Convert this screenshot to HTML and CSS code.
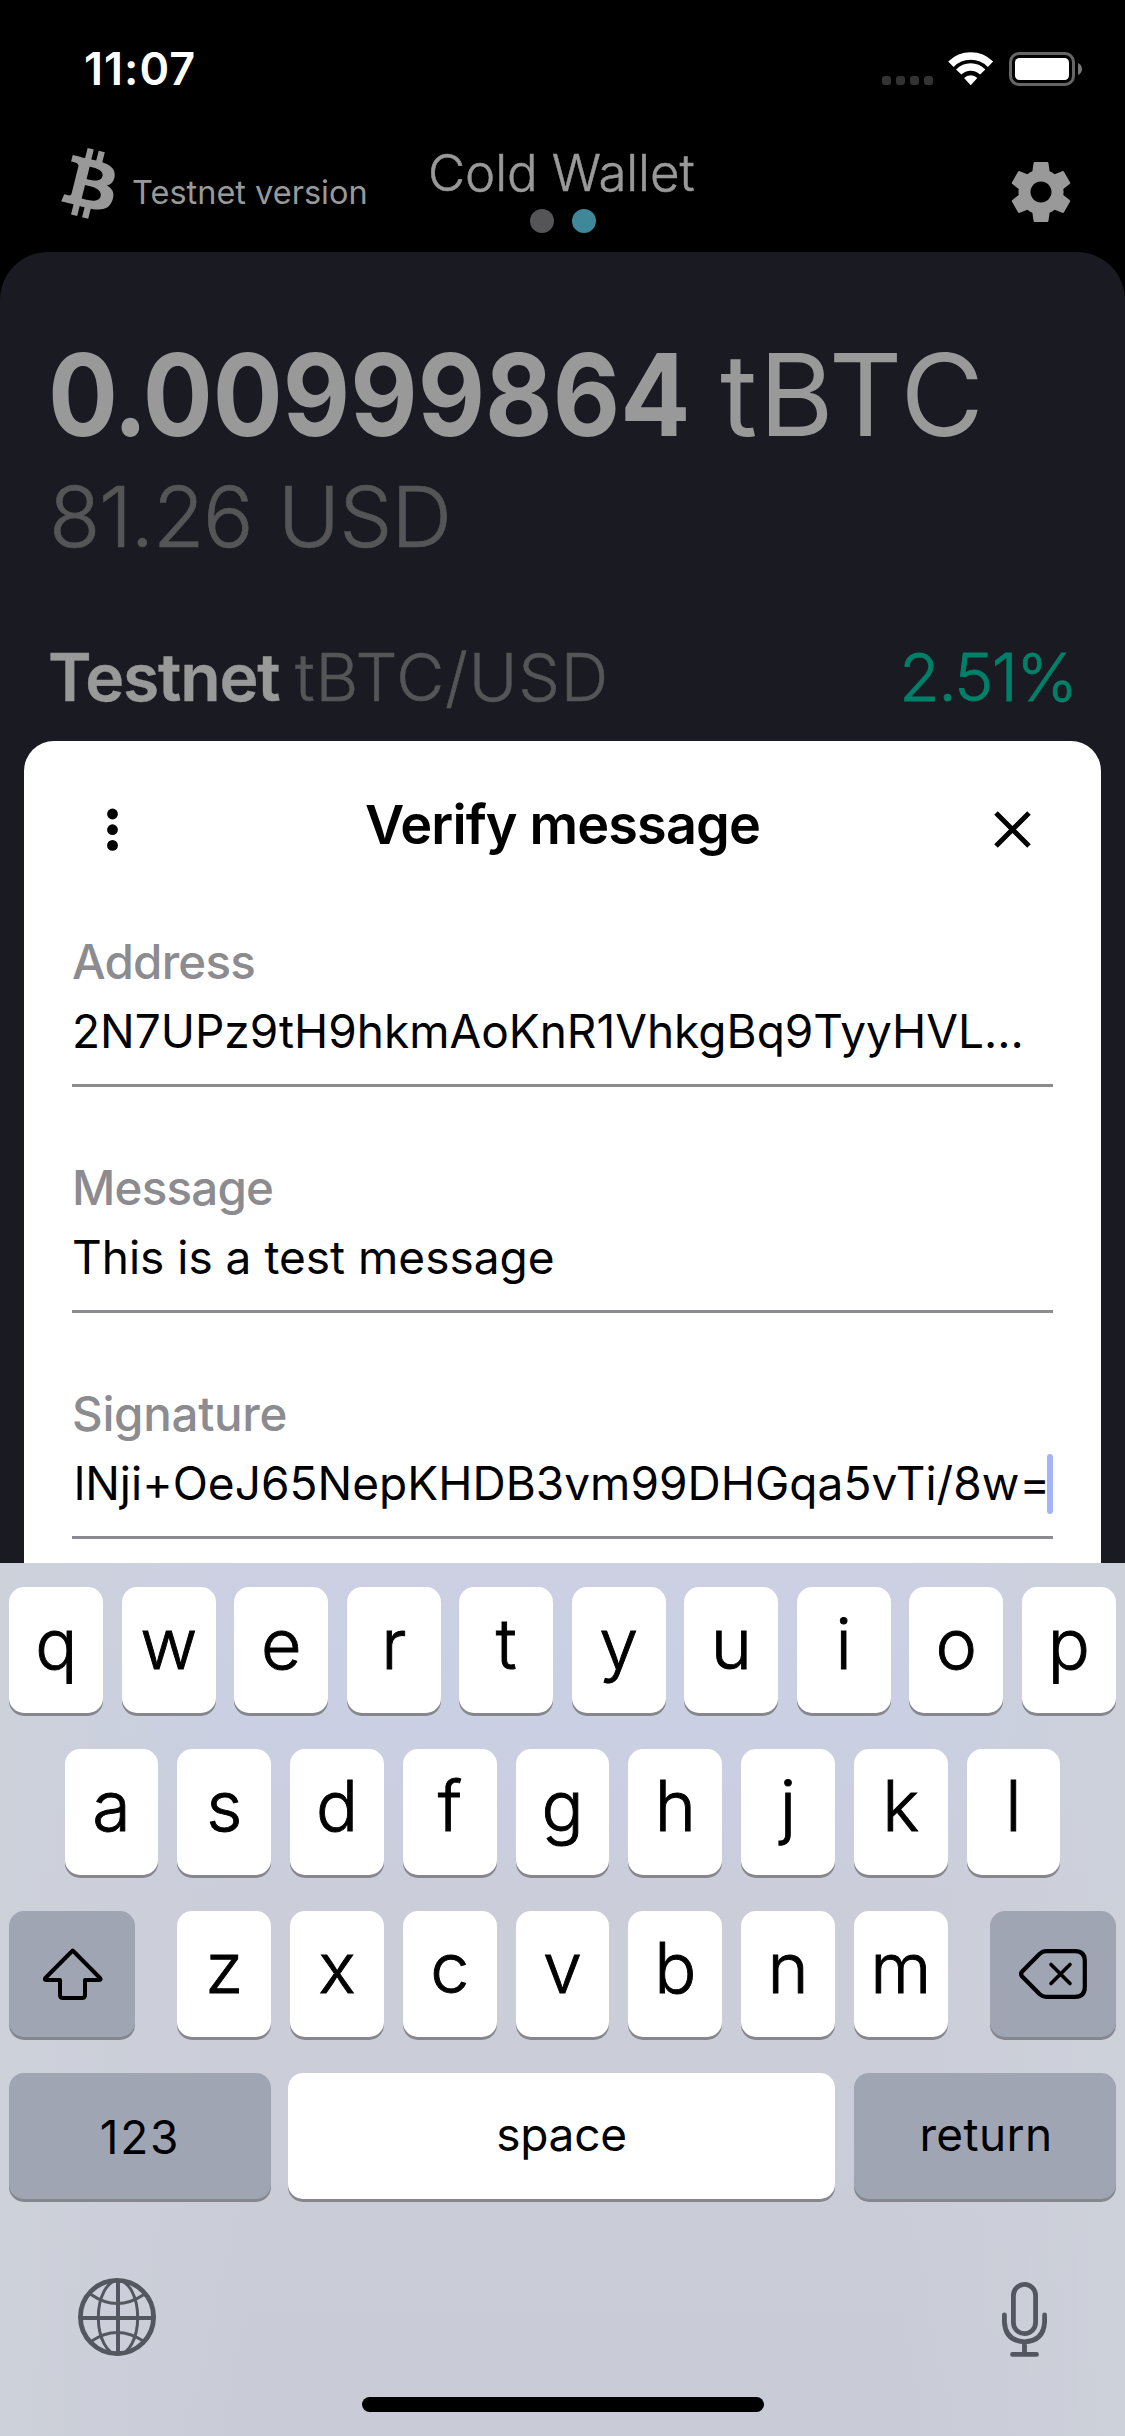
FILE: index.html
```html
<!DOCTYPE html>
<html lang="en">
<head>
<meta charset="utf-8">
<title>Cold Wallet</title>
<link rel="stylesheet" href="styles.css">
</head>
<body>
<div class="status">
  <span class="time">11:07</span>
  <div class="status-icons">
    <svg class="cell" width="51" height="34" viewBox="0 0 51 34" fill="#333"><rect x="0" y="24" width="9" height="9" rx="3"/><rect x="14" y="24" width="9" height="9" rx="3"/><rect x="28" y="24" width="9" height="9" rx="3"/><rect x="42" y="24" width="9" height="9" rx="3"/></svg>
    <svg class="wifi" width="46" height="34" viewBox="0 0 46 34" fill="none" stroke="#fff"><path stroke-width="7.6" d="M2.9 12.2A28 28 0 0 1 42.5 12.2"/><path stroke-width="7.4" d="M10.7 20A17 17 0 0 1 34.7 20"/><path fill="#fff" stroke="none" d="M22.7 33.2L16.1 25.9A9.3 9.3 0 0 1 29.3 25.9Z"/></svg>
    <svg width="73" height="34" viewBox="0 0 73 34"><rect x="1.5" y="1.5" width="63" height="31" rx="8.5" fill="none" stroke="#666" stroke-width="3"/><rect x="6" y="6" width="54" height="22" rx="4.5" fill="#fff"/><path fill="#777" d="M69 11q4 2 4 6t-4 6z"/></svg>
  </div>
</div>
<header class="header">
  <div class="brand">
    <svg width="54" height="71" viewBox="8.1 6 15.2 20" preserveAspectRatio="none" fill="#999"><path d="M23.189 14.02c.314-2.096-1.283-3.223-3.465-3.975l.708-2.84-1.728-.43-.69 2.765c-.454-.114-.92-.22-1.385-.326l.695-2.783L15.596 6l-.708 2.839c-.376-.086-.746-.17-1.104-.26l.002-.009-2.384-.595-.46 1.846s1.283.294 1.256.312c.7.175.826.638.805 1.006l-.806 3.235c.048.012.11.03.18.057l-.183-.045-1.13 4.532c-.086.212-.303.531-.793.41.018.025-1.256-.313-1.256-.313l-.858 1.978 2.25.561c.418.105.828.215 1.231.318l-.715 2.872 1.727.43.708-2.84c.472.127.93.245 1.378.357l-.706 2.828 1.728.43.715-2.866c2.948.558 5.164.333 6.097-2.333.752-2.146-.037-3.385-1.588-4.192 1.13-.26 1.98-1.003 2.207-2.538zm-3.95 5.538c-.533 2.147-4.148.986-5.32.695l.95-3.805c1.172.293 4.929.872 4.37 3.11zm.535-5.569c-.487 1.953-3.495.96-4.47.717l.86-3.45c.975.243 4.118.696 3.61 2.733z"/></svg>
    <span class="network">Testnet version</span>
  </div>
  <div class="wallet-name">
    <h1>Cold Wallet</h1>
    <div class="pager"><i></i><i class="on"></i></div>
  </div>
  <svg class="gear" width="72" height="72" viewBox="0 0 24 24" fill="#999"><path d="M19.43 12.98c.04-.32.07-.64.07-.98s-.03-.66-.07-.98l2.11-1.65c.19-.15.24-.42.12-.64l-2-3.46c-.12-.22-.39-.3-.61-.22l-2.49 1c-.52-.4-1.08-.73-1.69-.98l-.38-2.65C14.46 2.18 14.25 2 14 2h-4c-.25 0-.46.18-.49.42l-.38 2.65c-.61.25-1.17.59-1.69.98l-2.49-1c-.23-.09-.49 0-.61.22l-2 3.46c-.13.22-.07.49.12.64l2.11 1.65c-.04.32-.07.65-.07.98s.03.66.07.98l-2.11 1.65c-.19.15-.24.42-.12.64l2 3.46c.12.22.39.3.61.22l2.49-1c.52.4 1.08.73 1.69.98l.38 2.65c.03.24.24.42.49.42h4c.25 0 .46-.18.49-.42l.38-2.65c.61-.25 1.17-.59 1.69-.98l2.49 1c.23.09.49 0 .61-.22l2-3.46c.12-.22.07-.49-.12-.64l-2.11-1.65zM12 15.5c-1.93 0-3.5-1.57-3.5-3.5s1.57-3.5 3.5-3.5 3.5 1.57 3.5 3.5-1.57 3.5-3.5 3.5z"/></svg>
</header>
<main class="wallet">
  <div class="balance"><span class="amount-slot"><b class="amount">0<span class="point">.</span>00999864</b></span><span class="unit">tBTC</span></div>
  <div class="fiat"><span class="fiat-value">81.26</span> USD</div>
  <div class="market"><b class="market-name">Testnet</b><span class="pair">tBTC/USD</span><span class="change">2.51%</span></div>
  <section class="sheet">
    <div class="sheet-head">
      <svg class="more" width="11" height="45" viewBox="0 0 11 45"><circle cx="5.5" cy="6" r="5.4"/><circle cx="5.5" cy="21.7" r="5.4"/><circle cx="5.5" cy="37.4" r="5.4"/></svg>
      <h2>Verify message</h2>
      <svg class="close" width="37" height="37" viewBox="0 0 37 37" stroke="#000" stroke-width="5"><path d="M2 2L35 35M35 2L2 35"/></svg>
    </div>
    <div class="fields">
      <div class="field"><label>Address</label><div class="value">2N7UPz9tH9hkmAoKnR1VhkgBq9TyyHVL...</div></div>
      <div class="field"><label>Message</label><div class="value">This is a test message</div></div>
      <div class="field"><label class="wide">Signature</label><div class="value active">lNji+OeJ65NepKHDB3vm99DHGqa5vTi/8w=<i class="caret"></i></div></div>
    </div>
  </section>
</main>
<div class="keyboard">
  <div class="row"><span class="key">q</span><span class="key">w</span><span class="key">e</span><span class="key">r</span><span class="key">t</span><span class="key">y</span><span class="key">u</span><span class="key">i</span><span class="key">o</span><span class="key">p</span></div>
  <div class="row"><span class="key">a</span><span class="key">s</span><span class="key">d</span><span class="key">f</span><span class="key">g</span><span class="key">h</span><span class="key">j</span><span class="key">k</span><span class="key">l</span></div>
  <div class="row spread">
    <span class="key dark icon"><svg width="60" height="52" viewBox="0 0 60 52" fill="none" stroke="#000" stroke-width="4" stroke-linejoin="round"><path d="M29.7 2.5L57 30q1.5 2-.8 2H42V47q0 3-3 3H20q-3 0-3-3V32H3.2q-2.3 0-.8-2Z"/></svg></span>
    <div class="letters"><span class="key">z</span><span class="key">x</span><span class="key">c</span><span class="key">v</span><span class="key">b</span><span class="key">n</span><span class="key">m</span></div>
    <span class="key dark icon"><svg width="68" height="50" viewBox="0 0 68 50" fill="none" stroke="#000" stroke-width="4.2" stroke-linecap="round" stroke-linejoin="round"><path d="M3.2 22.5L20.5 5Q23.5 2.2 27 2.2H56Q65.8 2.2 65.8 12V38Q65.8 47.8 56 47.8H27Q23.5 47.8 20.5 45L3.2 27.5Q1 25 3.2 22.5Z"/><path stroke-width="3.6" d="M32 15.5L51 34.5M51 15.5L32 34.5"/></svg></span>
  </div>
  <div class="row spread">
    <span class="key dark side num">123</span><span class="key space">space</span><span class="key dark side return">return</span>
  </div>
  <div class="tools">
    <svg width="78" height="78" viewBox="0 0 78 78" fill="none" stroke="#53575f" stroke-width="3"><circle cx="39" cy="39" r="36.6" stroke-width="4.8"/><path stroke-width="4" d="M40 2V76M2 40H76"/><ellipse cx="40" cy="39.5" rx="19.7" ry="37"/><path d="M13 16.5Q39 34.5 66 16.5M13 63.5Q39 45.5 66 63.5"/></svg>
    <svg width="46" height="75" viewBox="0 0 46 75" fill="none" stroke="#53575f" stroke-width="4.8" stroke-linecap="round"><rect x="11.4" y="2.4" width="22.2" height="49.2" rx="11.1"/><path d="M2.4 33V40Q3.5 59 22.5 59.8Q41.5 59 42.6 40V33M22.5 60V72M10.5 72.4H34.5"/></svg>
  </div>
  <div class="home"></div>
</div>
</body>
</html>
```
FILE: styles.css
```css
* { box-sizing: border-box; }

body {
  margin: 0;
  width: 1125px;
  height: 2436px;
  overflow: hidden;
  background: #000;
  color: #999;
  font-family: Inter, "Liberation Sans", sans-serif;
  font-weight: 400;
  white-space: nowrap;
}

svg { display: block; flex: none; }
h1, h2 { margin: 0; }

/* Status bar */
.status {
  display: flex;
  justify-content: space-between;
  height: 120px;
  padding: 44px 43px 0 84px;
}
.time {
  font-size: 45px;
  font-weight: 600;
  line-height: 50px;
  letter-spacing: 1px;
  color: #fff;
}
.status-icons { display: flex; padding-top: 8px; }
.cell { margin-right: 15px; }
.wifi { margin-right: 15px; }

/* App header */
.header {
  display: grid;
  grid-template-columns: 366px 270px 1fr;
  height: 132px;
  padding: 0 48px 0 61px;
}
.brand { display: flex; gap: 17px; padding-top: 28px; }
.network {
  padding-top: 25px;
  font-size: 32.5px;
  line-height: 40px;
}
.wallet-name { padding-top: 22.5px; }
h1 {
  padding-left: 1px;
  font-size: 51px;
  font-weight: 300;
  line-height: 60px;
  letter-spacing: -.1px;
  -webkit-text-stroke: .5px;
}
.pager {
  display: flex;
  justify-content: center;
  gap: 18px;
  margin-top: 6.5px;
  padding-left: 2px;
}
.pager i {
  width: 24px;
  height: 24px;
  border-radius: 50%;
  background: #555558;
}
.pager .on { background: #3f8899; }
.gear { margin: 36px 0 0 auto; }

/* Wallet card */
.wallet {
  height: 1311px;
  padding-top: 78px;
  border-radius: 48px 48px 0 0;
  background: #1a1a22;
}
.balance {
  display: flex;
  padding-left: 48px;
  font-size: 114px;
  line-height: 130px;
}
.amount-slot { width: 672px; }
.amount {
  display: inline-block;
  font-weight: 700;
  transform: scaleX(.911);
  transform-origin: 0 50%;
}
.point { margin: 0 -5.5px; }
.unit { letter-spacing: 1.6px; }
.fiat {
  margin: 11.5px 0 0 49px;
  font-size: 84px;
  font-weight: 300;
  line-height: 90px;
  letter-spacing: -.75px;
  color: #555558;
  -webkit-text-stroke: .7px;
}
.fiat-value { margin-right: 3px; letter-spacing: -1.4px; }
.market {
  display: flex;
  margin-top: 75px;
  padding: 0 48.5px 0 48px;
  font-size: 66px;
  line-height: 80px;
}
.market-name {
  width: 247px;
  font-weight: 600;
  letter-spacing: -1.2px;
  -webkit-text-stroke: .4px;
}
.pair {
  font-weight: 300;
  letter-spacing: .8px;
  color: #555558;
  -webkit-text-stroke: .5px;
}
.change {
  margin-left: auto;
  font-weight: 300;
  letter-spacing: -1.6px;
  color: #008068;
  -webkit-text-stroke: .8px;
}

/* Verify message sheet */
.sheet {
  height: 822px;
  margin: 24.5px 24px 0;
  padding-top: 53.5px;
  border-radius: 30px 30px 0 0;
  background: #fff;
  color: #000;
}
.sheet-head {
  display: grid;
  grid-template-columns: 1fr auto 1fr;
  padding: 0 70px 0 83px;
}
.more { margin-top: 13px; }
.close { margin: 16.5px 0 0 auto; }
h2 {
  margin-left: -13px;
  font-size: 54px;
  font-weight: 600;
  line-height: 60px;
  letter-spacing: -.87px;
}
.fields {
  display: grid;
  gap: 71px;
  padding: 77.5px 48px 0;
}
.field {
  height: 155px;
  border-bottom: 3px solid #8b8b90;
}
label {
  display: block;
  padding-top: 1px;
  font-size: 47.5px;
  font-weight: 500;
  line-height: 58px;
  letter-spacing: -.8px;
  color: #8b8b90;
}
label.wide { letter-spacing: -.3px; }
.value {
  margin-top: 10px;
  font-size: 46px;
  line-height: 60px;
}
.active { position: relative; padding-left: 2px; letter-spacing: .03px; }
.caret {
  position: absolute;
  top: 1px;
  right: 0;
  width: 6px;
  height: 60px;
  border-radius: 3px;
  background: #a3b5f7;
}

/* Keyboard */
.keyboard {
  display: flex;
  flex-direction: column;
  height: 873px;
  padding: 24px 9px 0;
  background:
    linear-gradient(90deg, #cdd1da, #cdd1da00 22%, #cdd1da00 80%, #cdd1da),
    linear-gradient(#cdd0e3 0, #cacfe3 130px, #cacfe2 200px, #cbcdda 330px, #cbced8 450px, #c9ccd6 100%);
  color: #000;
}
.row {
  display: flex;
  justify-content: center;
  gap: 18.75px;
  margin-bottom: 36px;
}
.row + .row { gap: 19px; }
.row.spread { justify-content: space-between; gap: 0; }
.letters { display: flex; gap: 19px; }
.key {
  flex: none;
  width: 93.75px;
  height: 126px;
  border-radius: 15px;
  background: #fff;
  box-shadow: 0 3px 0 #85878d;
  font-size: 70px;
  font-weight: 300;
  line-height: 113px;
  text-align: center;
  -webkit-text-stroke: .9px;
}
.dark { background: #a0a5b4; }
.icon {
  display: flex;
  align-items: center;
  justify-content: center;
  width: 126px;
}
.icon:first-child { padding-left: 2px; }
.side { width: 262px; }
.side, .space {
  font-size: 46px;
  font-weight: 400;
  -webkit-text-stroke: 0;
}
.num { line-height: 128.5px; letter-spacing: 1.8px; }
.space {
  width: 547px;
  margin-left: -2px;
  line-height: 122.5px;
  letter-spacing: -.25px;
}
.return { padding-left: 2px; line-height: 122.5px; letter-spacing: .4px; }
.tools {
  display: flex;
  align-items: center;
  justify-content: space-between;
  margin-top: 41px;
  padding: 0 68px 0 69px;
}
.tools svg:last-child { margin-top: 6px; }
.home {
  width: 402px;
  height: 15px;
  margin: 40px auto 0;
  border-radius: 8px;
  background: #000;
}
```
